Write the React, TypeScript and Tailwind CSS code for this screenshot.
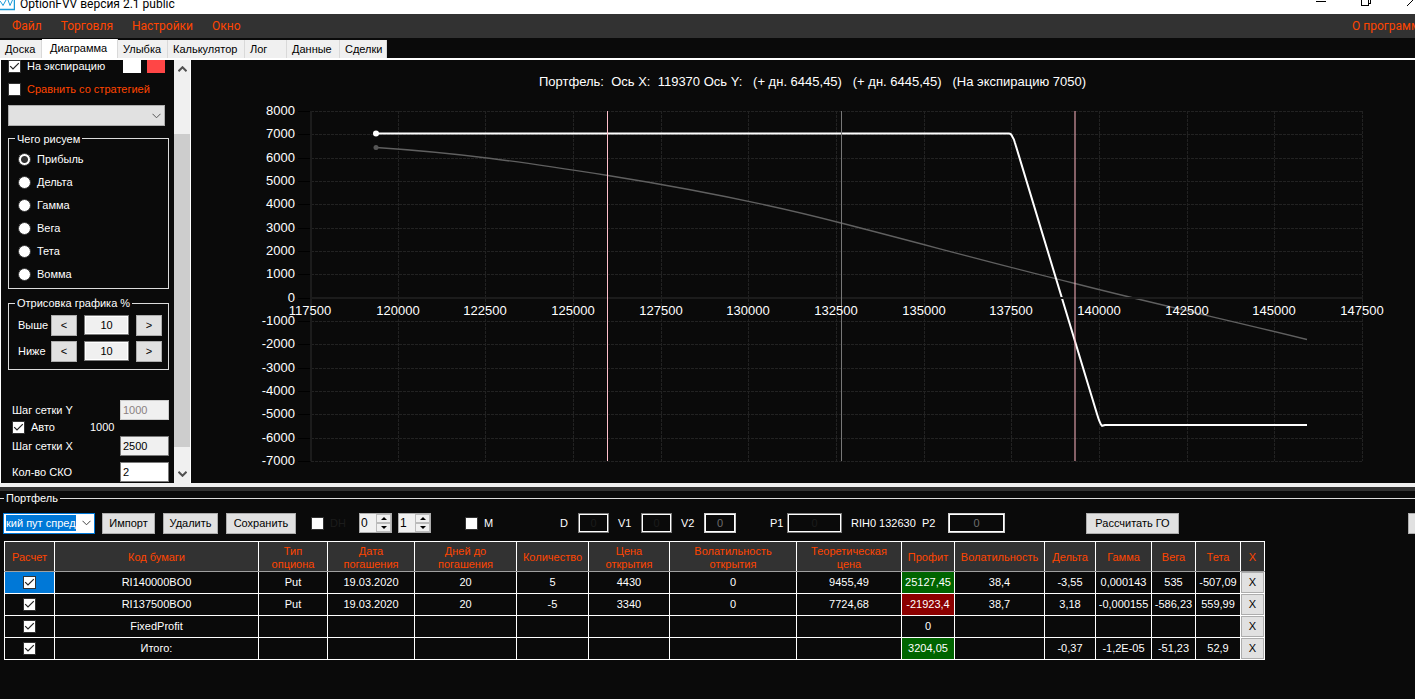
import { useState } from 'react';
import type { ReactNode } from 'react';

const menu = ['Файл', 'Торговля', 'Настройки', 'Окно'];

const tabs = [
  { name: 'Доска', width: 'w-[42px]' },
  { name: 'Диаграмма', width: 'w-[76px]' },
  { name: 'Улыбка', width: 'w-[50px]' },
  { name: 'Калькулятор', width: 'w-[77px]' },
  { name: 'Лог', width: 'w-[42px]' },
  { name: 'Данные', width: 'w-[53px]' },
  { name: 'Сделки', width: 'w-[47px]' },
];

const greeks = ['Прибыль', 'Дельта', 'Гамма', 'Вега', 'Тета', 'Вомма'];

const columns = [
  { title: 'Расчет', width: 'w-[50px]' },
  { title: 'Код бумаги', width: 'w-[204px]' },
  { title: 'Тип\nопциона', width: 'w-[69px]' },
  { title: 'Дата\nпогашения', width: 'w-[87px]' },
  { title: 'Дней до\nпогашения', width: 'w-[102px]' },
  { title: 'Количество', width: 'w-[72px]' },
  { title: 'Цена\nоткрытия', width: 'w-[81px]' },
  { title: 'Волатильность\nоткрытия', width: 'w-[127px]' },
  { title: 'Теоретическая\nцена', width: 'w-[105px]' },
  { title: 'Профит', width: 'w-[53px]' },
  { title: 'Волатильность', width: 'w-[90px]' },
  { title: 'Дельта', width: 'w-[51px]' },
  { title: 'Гамма', width: 'w-[56px]' },
  { title: 'Вега', width: 'w-[44px]' },
  { title: 'Тета', width: 'w-[45px]' },
  { title: 'X', width: 'w-[24px]' },
];

const rows = [
  ['RI140000BO0', 'Put', '19.03.2020', '20', '5', '4430', '0', '9455,49', '25127,45', '38,4', '-3,55', '0,000143', '535', '-507,09'],
  ['RI137500BO0', 'Put', '19.03.2020', '20', '-5', '3340', '0', '7724,68', '-21923,4', '38,7', '3,18', '-0,000155', '-586,23', '559,99'],
  ['FixedProfit', '', '', '', '', '', '', '', '0', '', '', '', '', ''],
  ['Итого:', '', '', '', '', '', '', '', '3204,05', '', '-0,37', '-1,2E-05', '-51,23', '52,9'],
];

const PROFIT = 8;

const yTicks = Array.from({ length: 16 }, (_, i) => 8000 - i * 1000);
const xTicks = Array.from({ length: 13 }, (_, i) => 117500 + i * 2500);

const px = (x: number) => Math.floor(119.6 + ((x - 117500) / 30000) * 1052);
const py = (y: number) => Math.round(51 + ((8000 - y) / 15000) * 350);

function profitColor(value: string) {
  const n = parseFloat(value);
  if (n > 0) return 'bg-[#006400]';
  if (n < 0) return 'bg-[#8b0000]';
  return '';
}

function Check({ label, checked = false, className = '' }: { label: string; checked?: boolean; className?: string }) {
  const [on, setOn] = useState(checked);
  return (
    <span className={`relative inline-flex size-[13px] shrink-0 ${className}`}>
      <input
        type="checkbox"
        aria-label={label}
        checked={on}
        onChange={() => setOn(!on)}
        className="size-[13px] appearance-none border border-[#333] bg-white"
      />
      {on && (
        <svg viewBox="0 0 13 13" className="pointer-events-none absolute inset-0 size-[13px]" fill="none" stroke="#222" strokeWidth="1.2">
          <path d="M2.2 6.2 5 9l5.8-5.8" />
        </svg>
      )}
    </span>
  );
}

function Button({ children, className = '' }: { children?: ReactNode; className?: string }) {
  return (
    <button type="button" className={`h-[21px] shrink-0 border border-[#adadad] bg-[#e1e1e1] text-center text-black ${className}`}>
      {children}
    </button>
  );
}

function Group({ title, className = '', children }: { title: string; className?: string; children: ReactNode }) {
  return (
    <fieldset className={`ml-[7px] w-[161px] border border-[#dcdcdc] ${className}`}>
      <legend className="ml-[6px] px-[2px] leading-[14px]">{title}</legend>
      {children}
    </fieldset>
  );
}

function Chevron({ className = '' }: { className?: string }) {
  return (
    <svg viewBox="0 0 9 6" className={`h-[6px] w-[9px] shrink-0 ${className}`} fill="none" stroke="currentColor">
      <path d="M.5.8 4.5 4.8 8.5.8" />
    </svg>
  );
}

function Spinner({ label, value }: { label: string; value: string }) {
  return (
    <div className="flex h-5 w-[33px] shrink-0 border border-[#adadad] bg-[#f0f0f0] text-black">
      <input aria-label={label} defaultValue={value} className="w-4 min-w-0 px-px text-[12px] outline-none" />
      <div className="flex flex-1 flex-col">
        {['M0 3 3 0 6 3Z', 'M0 0 3 3 6 0Z'].map((d, i) => (
          <button key={i} type="button" aria-label={i ? 'Меньше' : 'Больше'} className="flex flex-1 items-center justify-center border border-[#bbb]">
            <svg viewBox="0 0 6 3" className="h-[3px] w-[6px]"><path d={d} /></svg>
          </button>
        ))}
      </div>
    </div>
  );
}

function Field({ label, value = '0', width, labelWidth, dim = false }: { label: string; value?: string; width: string; labelWidth: string; dim?: boolean }) {
  return (
    <label className="flex shrink-0 items-center">
      <span className={labelWidth}>{label}</span>
      <input
        defaultValue={value}
        className={`h-5 border bg-[#0a0a0a] text-center inset-ring inset-ring-white outline-none ${dim ? 'border-[#ccc] text-[#6d6d6d]' : 'border-[#7a7a7a] text-[#1c1c1c]'} ${width}`}
      />
    </label>
  );
}

function RangeRow({ label }: { label: string }) {
  return (
    <div className="flex h-[22px] items-center pl-[9px]">
      <span className="w-[33px]">{label}</span>
      <Button className="w-[26px]">&lt;</Button>
      <input aria-label={label} defaultValue="10" className="mx-[7px] h-5 w-[45px] border border-[#7a7a7a] bg-[#f0f0f0] text-center text-black inset-ring inset-ring-white" />
      <Button className="w-[26px]">&gt;</Button>
    </div>
  );
}

function Sidebar() {
  const [greek, setGreek] = useState('Прибыль');
  return (
    <aside className="flex w-[191px] shrink-0 overflow-hidden border-r border-l border-white">
      <div className="flex w-[173px] shrink-0 flex-col overflow-hidden">
        <div className="flex h-[14px] items-center pl-[7px]">
          <Check label="На экспирацию" checked />
          <span className="ml-[6px] w-[96px]">На экспирацию</span>
          <span className="h-[13px] w-[18px] bg-white" />
          <span className="ml-[6px] h-[13px] w-[18px] bg-[#ff4646]" />
        </div>
        <div className="mt-2 flex h-[15px] items-center pl-[7px] text-[#ff4500]">
          <Check label="Сравнить со стратегией" />
          <span className="ml-[6px] whitespace-nowrap">Сравнить со стратегией</span>
        </div>
        <div className="relative mt-2 ml-[7px] w-[157px]">
          <select aria-label="Стратегия" className="h-[21px] w-full appearance-none border border-[#adadad] bg-[#e1e1e1] text-black">
            <option></option>
          </select>
          <Chevron className="pointer-events-none absolute top-2 right-1 text-[#555]" />
        </div>

        <Group title="Чего рисуем" className="mt-[6px] h-[159px]">
          <div className="pt-[2px]">
            {greeks.map((name) => (
              <label key={name} className="flex h-[23px] items-center pl-[9px]">
                <input
                  type="radio"
                  name="greek"
                  checked={greek === name}
                  onChange={() => setGreek(name)}
                  className="size-[13px] appearance-none rounded-full border border-[#333] bg-white checked:bg-[radial-gradient(circle,#333_0_3px,#fff_4px)]"
                />
                <span className="ml-[6px]">{name}</span>
              </label>
            ))}
          </div>
        </Group>

        <Group title="Отрисовка графика %" className="mt-[7px] h-[75px]">
          <div className="flex flex-col gap-1 pt-1">
            <RangeRow label="Выше" />
            <RangeRow label="Ниже" />
          </div>
        </Group>

        <div className="mt-[29px] flex h-[22px] items-center pl-[11px]">
          <label htmlFor="stepY" className="w-[108px]">Шаг сетки Y</label>
          <input id="stepY" disabled defaultValue="1000" className="h-5 w-[49px] border border-[#ccc] bg-[#f0f0f0] px-[2px] text-[#8a8080]" />
        </div>
        <div className="flex h-[13px] items-center pl-[11px]">
          <Check label="Авто" checked />
          <span className="ml-[6px] w-[59px]">Авто</span>
          <span>1000</span>
        </div>
        <div className="flex h-[24px] items-center pl-[11px]">
          <label htmlFor="stepX" className="w-[108px]">Шаг сетки X</label>
          <input id="stepX" defaultValue="2500" className="h-5 w-[49px] border border-[#7a7a7a] bg-[#f0f0f0] px-[2px] text-black" />
        </div>
        <div className="mt-[3px] flex h-[22px] shrink-0 items-center pl-[11px]">
          <label htmlFor="sko" className="w-[108px]">Кол-во СКО</label>
          <input id="sko" defaultValue="2" className="h-5 w-[49px] border border-[#7a7a7a] bg-white px-[2px] text-black" />
        </div>
      </div>

      <div className="flex flex-1 flex-col items-center bg-[#f0f0f0] text-[#505050]">
        <Chevron className="mt-[6px] rotate-180 stroke-2" />
        <div className="mt-[62px] h-[313px] w-full bg-[#cdcdcd]" />
        <Chevron className="mt-6 stroke-2" />
      </div>
    </aside>
  );
}

function Chart() {
  return (
    <svg viewBox="0 0 1224 423" className="min-w-0 flex-1 text-[13px]" fill="#fff">
      <text x="348" y="26" className="whitespace-pre">
        {'Портфель:  Ось X:  119370 Ось Y:   (+ дн. 6445,45)   (+ дн. 6445,45)   (На экспирацию 7050)'}
      </text>

      <g shapeRendering="crispEdges" stroke="#222" strokeDasharray="3 1">
        {yTicks.map((t) => (
          <path key={t} d={`M120 ${py(t) + 0.5}H1172`} />
        ))}
        {xTicks.map((t) => (
          <path key={t} d={`M${px(t) + 0.5} 51V401`} />
        ))}
      </g>
      <g shapeRendering="crispEdges" stroke="#000">
        {yTicks.map((t) => (
          <path key={t} d={`M107 ${py(t) + 0.5}H119`} />
        ))}
      </g>

      <path
        d="M185 87.5C270 93 330 102 417 115.5C520 132 600 150 650 163C740 186 800 203 884 223.5C960 243 1050 263 1116 279.5"
        fill="none"
        stroke="#606060"
        strokeWidth="1.3"
      />
      <circle cx="185" cy="87.5" r="2.5" fill="#555" />

      <path
        d="M185 73.5H818Q820 73.5 821 76Q823 79 824 83L906 354Q909 364 911 365.8L914 365H1116"
        fill="none"
        stroke="#fff"
        strokeWidth="2"
      />
      <circle cx="185" cy="73.5" r="3" />

      <g shapeRendering="crispEdges">
        <path d="M120 51V401M120 237.500H1172" stroke="#1c1c1c" strokeWidth="2" />
        <path d="M416.500 51V401" stroke="#ffc0cb" />
        <path d="M650.500 51V401" stroke="#777" />
        <path d="M884 51V401" stroke="#ffb6c1" strokeOpacity=".5" strokeWidth="2" />
      </g>

      {yTicks.map((t) => (
        <text key={t} x="104" y={py(t) + 4} textAnchor="end">{t}</text>
      ))}
      {xTicks.map((t) => (
        <text key={t} x={px(t)} y="255" textAnchor="middle">{t}</text>
      ))}
    </svg>
  );
}

function Portfolio() {
  return (
    <section className="flex-1">
      <div className="flex h-[14px] items-center">
        <span className="w-1 border-t border-[#dcdcdc]" />
        <h2 className="px-[2px]">Портфель</h2>
        <span className="flex-1 border-t border-[#dcdcdc]" />
      </div>

      <div className="mt-[6px] flex h-[24px] items-center overflow-hidden">
        <div className="ml-[3px] flex h-[21px] w-[92px] shrink-0 items-center border border-[#0078d7] bg-white pl-[2px]">
          <input aria-label="Стратегия портфеля" defaultValue="кий пут спред" className="h-4 w-[70px] min-w-0 bg-[#0078d7] text-white outline-none" />
          <Chevron className="ml-[6px] text-[#444]" />
        </div>
        <Button className="ml-[7px] w-[53px]">Импорт</Button>
        <Button className="ml-2 w-[55px]">Удалить</Button>
        <Button className="ml-2 w-[70px]">Сохранить</Button>
        <Check label="DH" className="ml-[15px]" />
        <span className="ml-[6px] w-[29px] text-[#1c1c1c]">DH</span>
        <Spinner label="DH от" value="0" />
        <span className="w-[6px]" />
        <Spinner label="DH до" value="1" />
        <Check label="M" className="ml-[34px]" />
        <span className="ml-[6px] w-[76px]">M</span>
        <Field label="D" width="w-[31px]" labelWidth="w-[18px]" />
        <span className="w-[9px]" />
        <Field label="V1" width="w-[31px]" labelWidth="w-[23px]" />
        <span className="w-[9px]" />
        <Field label="V2" width="w-[32px]" labelWidth="w-[23px]" dim />
        <span className="w-[34px]" />
        <Field label="P1" width="w-[55px]" labelWidth="w-[17px]" />
        <span className="ml-[9px] w-[71px] whitespace-nowrap">RIH0 132630</span>
        <Field label="P2" width="w-[57px]" labelWidth="w-[26px]" dim />
        <Button className="ml-[81px] w-[93px]">Рассчитать ГО</Button>
        <Button className="ml-auto w-[7px] border-r-0" />
      </div>

      <table className="mt-[6px] ml-1 w-[1261px] table-fixed border-collapse border border-white text-center">
        <thead>
          <tr className="h-[30px] bg-[#323232] leading-[13px] text-[#ff4500]">
            {columns.map((col) => (
              <th key={col.title} className={`border-x border-b border-white border-b-[#a0a0a0] p-0 pt-[2px] font-normal whitespace-pre-line ${col.width}`}>
                {col.title}
              </th>
            ))}
          </tr>
        </thead>
        <tbody>
          {rows.map((row, i) => (
            <tr key={row[0]} className="h-[22px]">
              <td className={`border border-white p-0 ${i === 0 ? 'bg-[#0078d7]' : ''}`}>
                <div className="flex justify-center"><Check label={row[0]} checked /></div>
              </td>
              {row.map((cell, j) => (
                <td key={j} className={`border border-white p-0 whitespace-nowrap ${j === PROFIT ? profitColor(cell) : ''}`}>
                  {cell}
                </td>
              ))}
              <td className="border border-white p-0">
                <Button className="block w-full">X</Button>
              </td>
            </tr>
          ))}
        </tbody>
      </table>
    </section>
  );
}

export default function App() {
  return (
    <div className="flex min-h-screen flex-col overflow-hidden bg-[#0a0a0a] font-['Liberation_Sans',Arial,sans-serif] text-[11px] leading-[13px] text-white">
      <header className="flex h-[14px] items-end overflow-hidden bg-white font-['Roboto',sans-serif] text-[12px] leading-[20px] text-black">
        <svg viewBox="0 0 15 14" className="h-[14px] w-[15px]" fill="none" stroke="#1a9ad7">
          <path d="M0 9.5H14.5V0" strokeWidth="1.5" />
          <path d="M0 1 1.500 3 3 5.500 6 0M8 0 10 5.500 12.500 0" />
        </svg>
        <h1 className="ml-[5px] flex-1">OptionFVV версия 2.1 public</h1>
        <svg viewBox="0 0 100 14" className="h-[14px] w-[100px]" fill="none" stroke="#000" shapeRendering="crispEdges">
          <path d="M1 1.500H11M46.500 0V5.500H53.500V0M55.500 0V3.500H54M92 6 99 -1" />
        </svg>
      </header>

      <nav className="flex h-6 items-center overflow-hidden bg-[#323232] pl-3 font-['Roboto',sans-serif] text-[12px] text-[#ff4500]">
        {menu.map((item) => (
          <a key={item} href="#" className="mr-[19px]">{item}</a>
        ))}
        <a href="#" className="ml-auto w-[63px] whitespace-nowrap">О программе</a>
      </nav>

      <div className="flex h-[22px] items-end border-b-2 border-white text-black">
        {tabs.map((tab) => (
          <button
            key={tab.name}
            type="button"
            className={`shrink-0 whitespace-nowrap border-r border-[#d9d9d9] text-left ${tab.width} ${tab.name === 'Диаграмма' ? 'h-[19px] bg-white pl-2' : 'h-[18px] bg-[#f0f0f0] pt-px pl-[5px]'}`}
          >
            {tab.name}
          </button>
        ))}
      </div>

      <main className="flex h-[423px]">
        <Sidebar />
        <Chart />
      </main>
      <div className="h-2 border-t-4 border-[#f0f0f0] bg-[#323232]" />

      <Portfolio />
    </div>
  );
}
